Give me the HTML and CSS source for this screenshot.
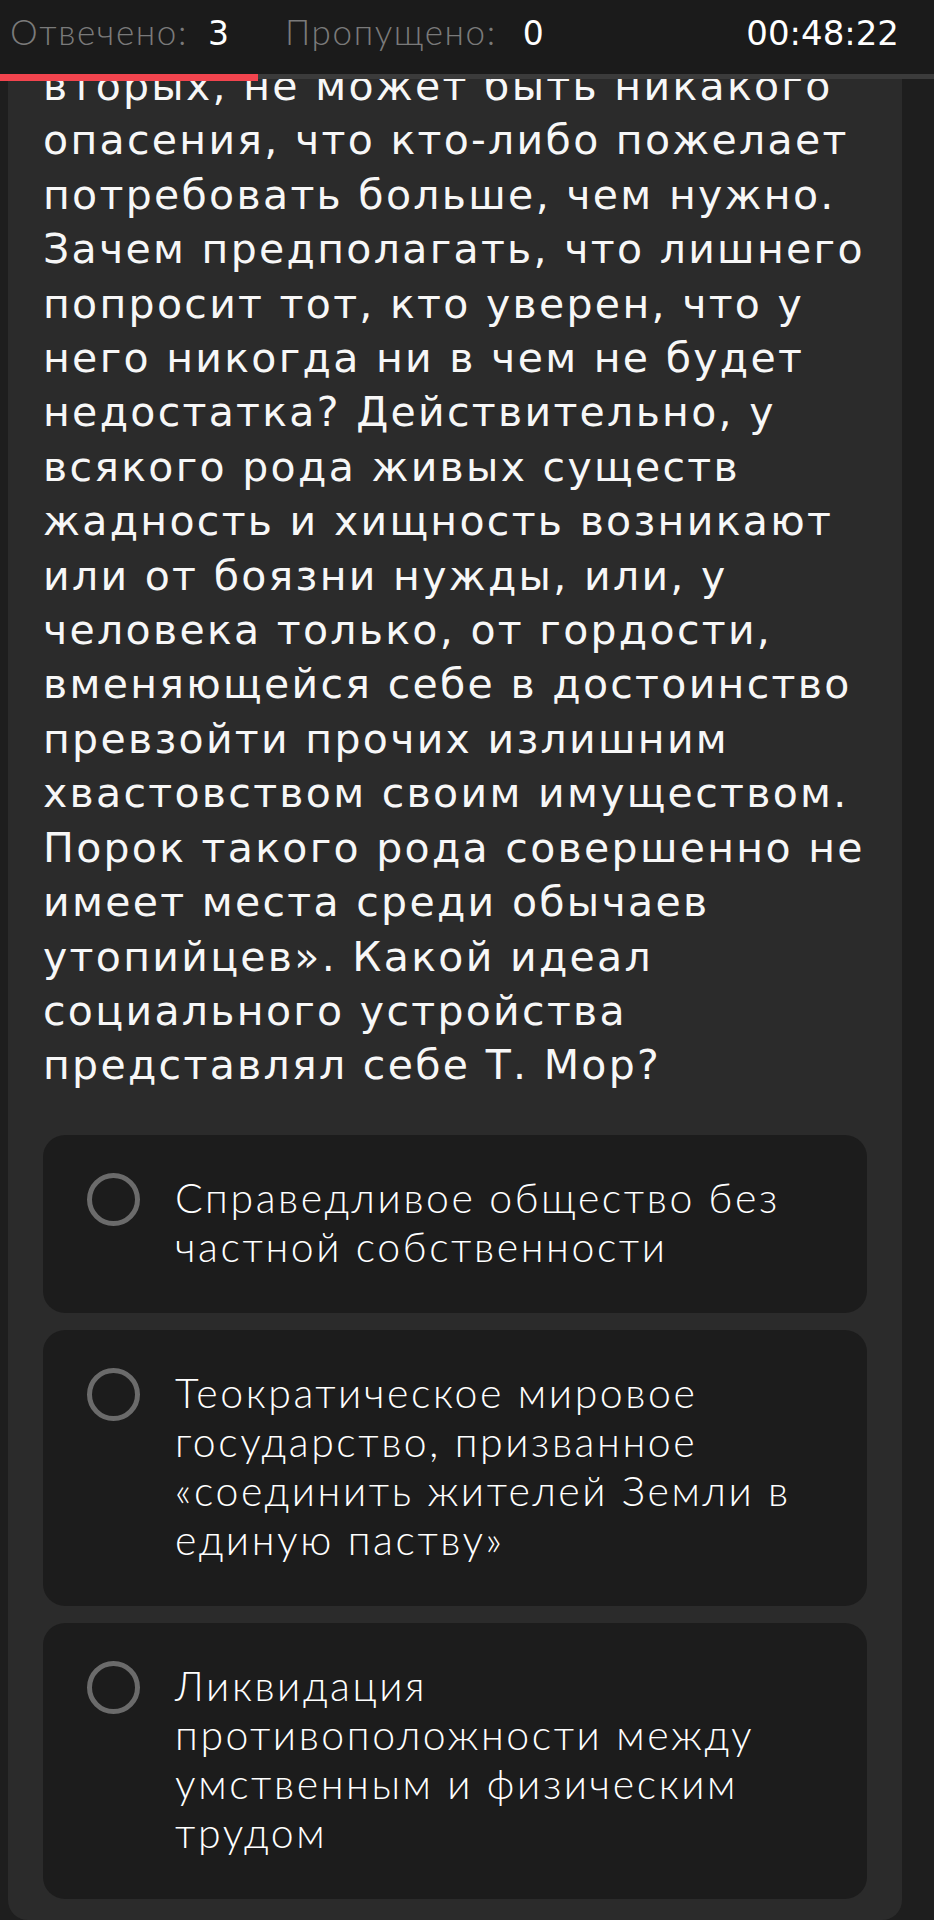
FILE: index.html
```html
<!DOCTYPE html>
<html lang="ru">
<head>
<meta charset="utf-8">
<title>Тест</title>
<link rel="stylesheet" href="styles.css">
</head>
<body>
<header class="topbar">
  <div class="stats">
    <span class="stat-label">Отвечено:</span><span class="stat-value stat-value--answered">3</span>
    <span class="stat-label stat-label--skipped">Пропущено:</span><span class="stat-value stat-value--skipped">0</span>
    <span class="timer">00:48:22</span>
  </div>
  <div class="progress">
    <div class="progress-fill" style="width:258px"></div>
    <div class="progress-track"></div>
  </div>
</header>

<main class="card">
  <p class="question">вторых, не может быть никакого<br>опасения, что кто-либо пожелает<br>потребовать больше, чем нужно.<br>Зачем предполагать, что лишнего<br>попросит тот, кто уверен, что у<br>него никогда ни в чем не будет<br>недостатка? Действительно, у<br>всякого рода живых существ<br>жадность и хищность возникают<br>или от боязни нужды, или, у<br>человека только, от гордости,<br>вменяющейся себе в достоинство<br>превзойти прочих излишним<br>хвастовством своим имуществом.<br>Порок такого рода совершенно не<br>имеет места среди обычаев<br>утопийцев». Какой идеал<br>социального устройства<br>представлял себе Т. Мор?</p>

  <ul class="answers">
    <li class="answer">
      <span class="radio"></span>
      <span class="answer-text">Справедливое общество без<br>частной собственности</span>
    </li>
    <li class="answer">
      <span class="radio"></span>
      <span class="answer-text">Теократическое мировое<br>государство, призванное<br>«соединить жителей Земли в<br>единую паству»</span>
    </li>
    <li class="answer">
      <span class="radio"></span>
      <span class="answer-text">Ликвидация<br>противоположности между<br>умственным и физическим<br>трудом</span>
    </li>
  </ul>
</main>
</body>
</html>
```
FILE: styles.css
```css
html, body {
  margin: 0;
  padding: 0;
}
body {
  background: #1e1e1e;
  font-family: "DejaVu Sans", sans-serif;
  color: #f7f7f7;
  overflow: hidden;
}

/* ---------- top bar ---------- */
.topbar {
  position: fixed;
  top: 0;
  left: 0;
  right: 0;
  z-index: 10;
}
.stats {
  display: flex;
  align-items: baseline;
  height: 74px;
  box-sizing: border-box;
  padding: 9px 35px 0 10px;
  background: #1b1b1b;
}
.stat-label {
  font-family: "Lato", sans-serif;
  font-weight: 300;
  font-size: 35px;
  letter-spacing: 1.6px;
  line-height: 44px;
  color: #7a7a7a;
}
.stat-label--skipped {
  margin-left: 56px;
}
.stat-value {
  font-family: "DejaVu Sans", sans-serif;
  font-size: 33px;
  line-height: 44px;
  color: #ffffff;
}
.stat-value--answered {
  margin-left: 20px;
}
.stat-value--skipped {
  margin-left: 26px;
}
.timer {
  margin-left: auto;
  font-family: "DejaVu Sans", sans-serif;
  font-size: 34px;
  letter-spacing: 0;
  line-height: 44px;
  color: #ffffff;
}
.progress {
  display: flex;
  align-items: flex-start;
  height: 8px;
}
.progress-fill {
  height: 7px;
  background: #f2444e;
}
.progress-track {
  flex: 1;
  height: 5px;
  background: #3b3b3b;
}

/* ---------- card ---------- */
.card {
  display: block;
  width: 894px;
  box-sizing: border-box;
  margin: 0 0 0 8px;
  padding: 59px 35px 21px;
  background: #2b2b2b;
  border-radius: 0 0 20px 20px;
}
.question {
  margin: 0;
  font-size: 41px;
  line-height: 54.4px;
  letter-spacing: 2.3px;
  white-space: nowrap;
  color: #f7f7f7;
}

/* ---------- answers ---------- */
.answers {
  list-style: none;
  margin: 42px 0 0;
  padding: 0;
  display: flex;
  flex-direction: column;
  gap: 17px;
}
.answer {
  display: flex;
  align-items: flex-start;
  gap: 35px;
  padding: 38px 30px 42px 44px;
  background: #1c1c1c;
  border-radius: 22px;
}
.radio {
  flex: none;
  width: 53px;
  height: 53px;
  box-sizing: border-box;
  border: 5px solid #6b6b6b;
  border-radius: 50%;
}
.answer-text {
  font-family: "Lato", sans-serif;
  font-weight: 300;
  font-size: 41px;
  line-height: 49px;
  letter-spacing: 2.6px;
  white-space: nowrap;
  color: #ffffff;
}
```
